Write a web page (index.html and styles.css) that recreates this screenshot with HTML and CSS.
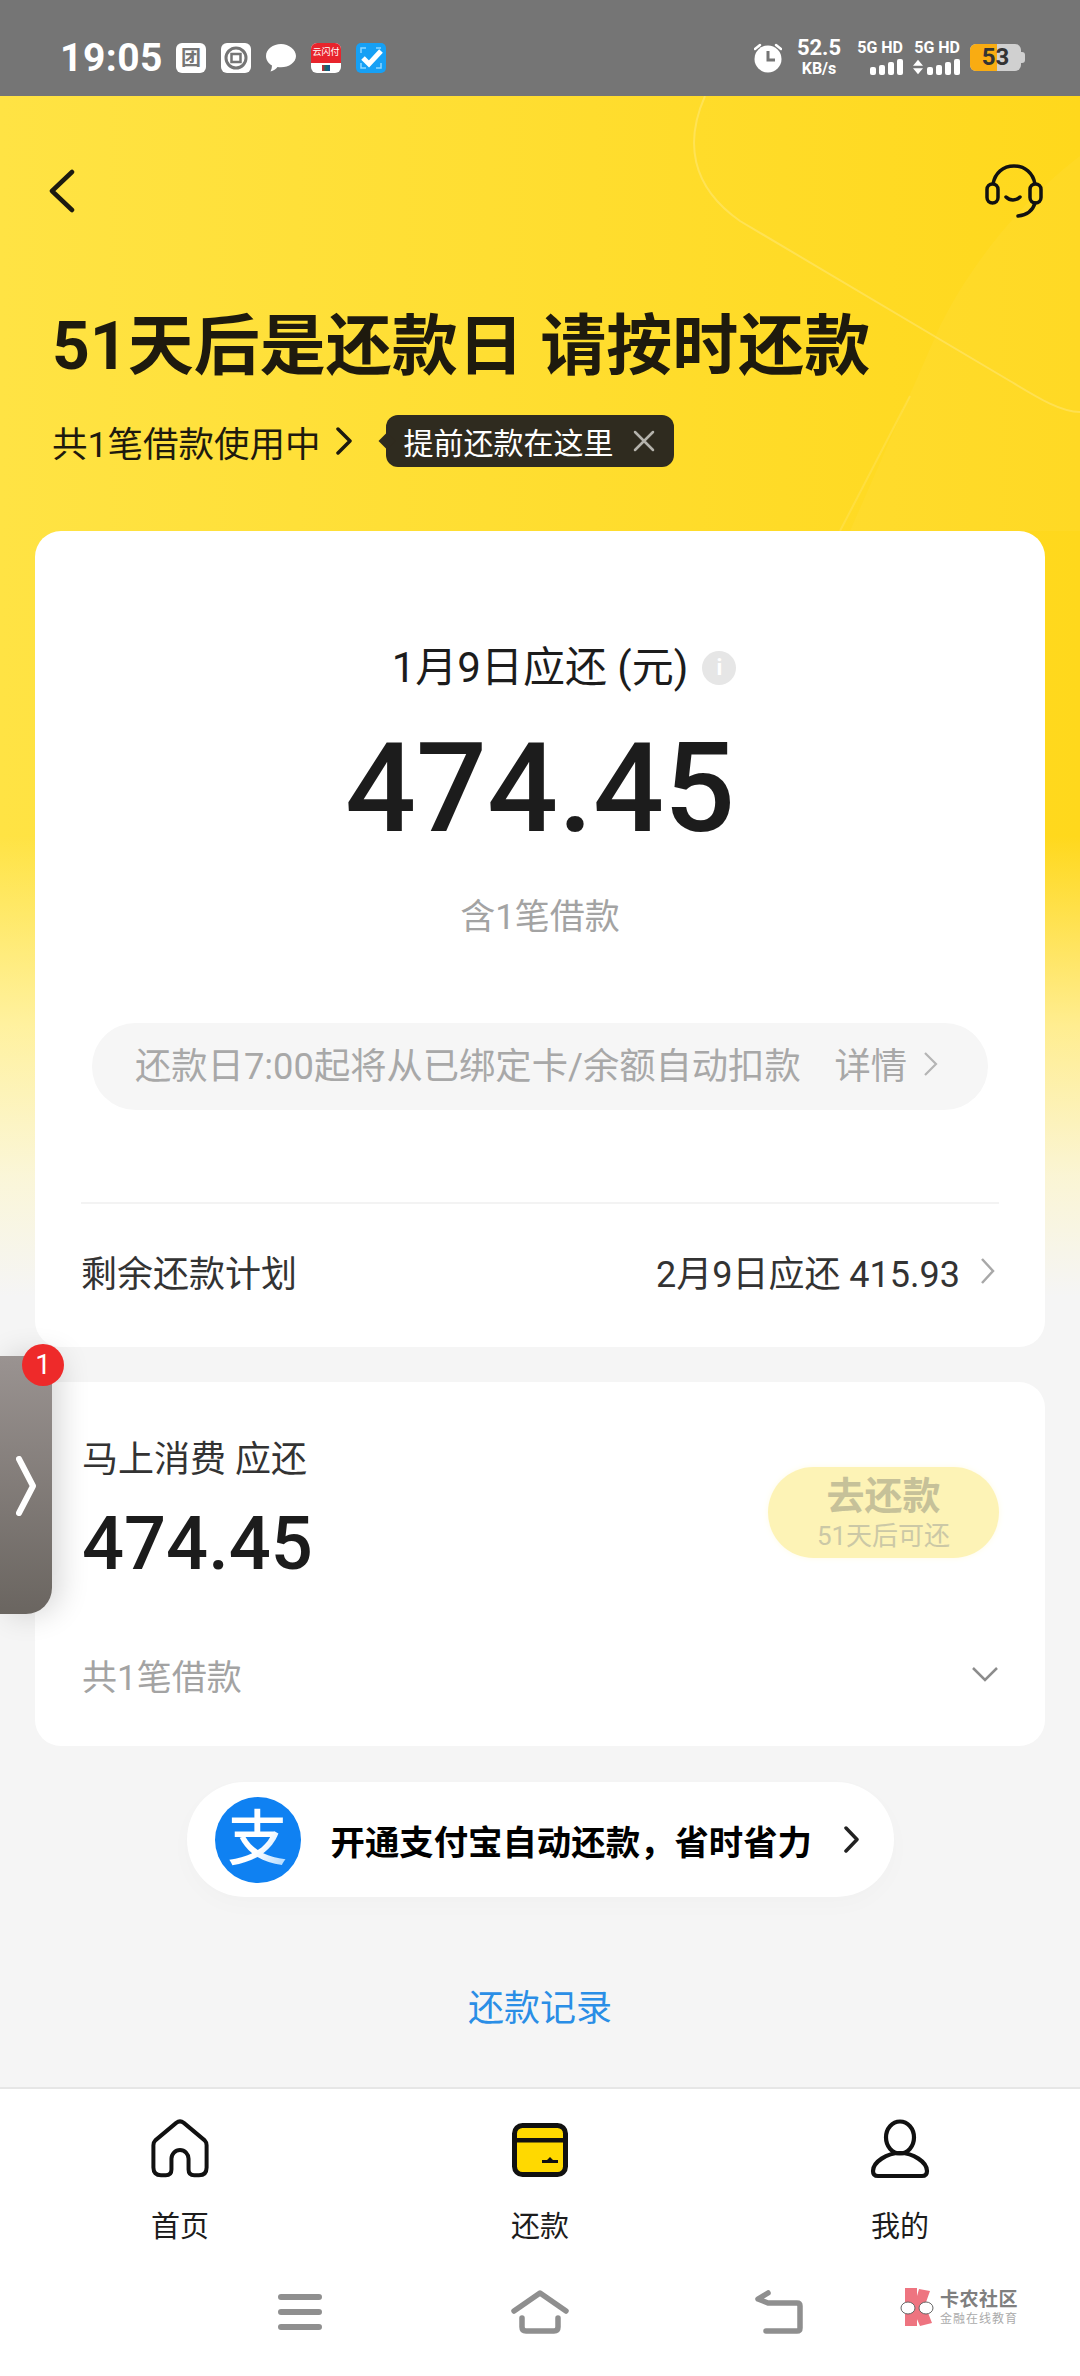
FILE: index.html
```html
<!DOCTYPE html>
<html lang="zh-CN">
<head>
  <meta charset="UTF-8">
  <title>还款</title>
  <link rel="stylesheet" href="styles.css">
</head>
<body>

  <div class="statusbar">
    <div class="status-left">
      <span class="time">19:05</span>
      <span class="app-icon app-tuan">团</span>
      <svg class="app-icon" viewBox="0 0 30 30">
        <rect width="30" height="30" rx="6" fill="#fff"/>
        <circle cx="15" cy="15" r="10" fill="none" stroke="#757575" stroke-width="3"/>
        <rect x="10.5" y="11" width="9" height="8" fill="none" stroke="#757575" stroke-width="2.5"/>
      </svg>
      <svg class="app-icon" viewBox="0 0 30 30">
        <path d="M15 1C7 1 0 6 0 13c0 4 2.500 7.500 6 9.500 0 2-.5 4-1.500 6 3-.7 5.500-2.500 7-4.500 1 .2 2.300.3 3.500.3 8 0 15-5 15-11.300S23 1 15 1z" fill="#fff"/>
      </svg>
      <span class="app-icon app-union"><span class="union-top">云闪付</span><i class="union-flag"></i></span>
      <svg class="app-icon" viewBox="0 0 30 30">
        <rect width="30" height="30" rx="5" fill="#16a0f5"/>
        <path d="M5 10V5h5M20 5h5M25 20v5h-5M10 25H5v-5" fill="none" stroke="#8fd6ff" stroke-width="1.500"/>
        <path d="M7 15l6 6L25 8" fill="none" stroke="#fff" stroke-width="5"/>
      </svg>
    </div>
    <div class="status-right">
      <svg class="alarm" viewBox="0 0 28 30">
        <circle cx="14" cy="16" r="13.500" fill="#fff"/>
        <path d="M1 6l5-4M27 6l-5-4" stroke="#fff" stroke-width="2.500" stroke-linecap="round"/>
        <path d="M14 8v9h7" fill="none" stroke="#757575" stroke-width="3"/>
      </svg>
      <div class="speed"><b>52.5</b><span>KB/s</span></div>
      <div class="sim">
        <span class="sim-label">5G HD</span>
        <div class="bars"><i class="b1"></i><i class="b2"></i><i class="b3"></i><i class="b4"></i></div>
      </div>
      <div class="sim">
        <span class="sim-label">5G HD</span>
        <div class="bars">
          <svg class="updown" viewBox="0 0 11 16"><path d="M5.500 0L11 6.500H0zM5.500 16L0 9.500h11z" fill="#fff"/></svg>
          <i class="b1"></i><i class="b2"></i><i class="b3"></i><i class="b4"></i>
        </div>
      </div>
      <div class="battery"><div class="battery-fill"></div><span>53</span></div>
    </div>
  </div>

  <div class="main">
    <svg class="deco" viewBox="0 0 440 460">
      <path d="M440 60C400 90 340 150 300 230L210 435H440z" fill="#fff" opacity="0.04"/>
      <path d="M65 0C45 45 50 90 100 125L370 285C395 300 420 316 440 316" fill="none" stroke="#fff" stroke-width="2" opacity="0.2"/>
      <path d="M200 435L270 300" fill="none" stroke="#fff" stroke-width="2" opacity="0.12"/>
    </svg>

    <div class="topbar">
      <svg class="back" viewBox="0 0 26 44"><path d="M23 3L3 22l20 19" fill="none" stroke="#1c1a10" stroke-width="4.500" stroke-linecap="round" stroke-linejoin="round"/></svg>
      <svg class="service" viewBox="0 0 58 54">
        <path d="M8 20C10 9 18 2 29 2s19 7 21 18" fill="none" stroke="#111" stroke-width="3.500"/>
        <rect x="2" y="20" width="11" height="19" rx="5.500" fill="none" stroke="#111" stroke-width="3.500"/>
        <rect x="45" y="20" width="11" height="19" rx="5.500" fill="none" stroke="#111" stroke-width="3.500"/>
        <path d="M21 33c4 4 10 4 14 0" fill="none" stroke="#111" stroke-width="3.500" stroke-linecap="round"/>
        <path d="M50 39c-2 7-8 12-17 13" fill="none" stroke="#111" stroke-width="3.500" stroke-linecap="round"/>
      </svg>
    </div>

    <h1 class="title">51天后是还款日 请按时还款</h1>
    <div class="subtitle">
      <span>共1笔借款使用中</span>
      <svg class="sub-arrow" viewBox="0 0 18 28"><path d="M3 2l12 12L3 26" fill="none" stroke="#1c1a10" stroke-width="3.500" stroke-linecap="round" stroke-linejoin="round"/></svg>
      <div class="tip">
        <span>提前还款在这里</span>
        <svg class="tip-close" viewBox="0 0 22 22"><path d="M2 2l18 18M20 2L2 20" stroke="#b5b3ac" stroke-width="2.500" stroke-linecap="round"/></svg>
      </div>
    </div>

    <div class="card card-due">
      <div class="due-label">1月9日应还 (元)<span class="info">i</span></div>
      <div class="due-amount">474.45</div>
      <div class="due-sub">含1笔借款</div>
      <div class="notice">
        <span class="notice-text">还款日7:00起将从已绑定卡/余额自动扣款</span>
        <span class="notice-more">详情</span>
        <svg class="notice-arrow" viewBox="0 0 15 26"><path d="M2 2l11 11L2 24" fill="none" stroke="#b5b5b5" stroke-width="2.200"/></svg>
      </div>
      <div class="plan-row">
        <span>剩余还款计划</span>
        <div class="plan-right">
          <span>2月9日应还 415.93</span>
          <svg class="plan-arrow" viewBox="0 0 15 28"><path d="M2 2l11 12L2 26" fill="none" stroke="#a8a8a8" stroke-width="2.500"/></svg>
        </div>
      </div>
    </div>

    <div class="card card-loan">
      <div class="loan-top">
        <div>
          <div class="loan-label">马上消费 应还</div>
          <div class="loan-amount">474.45</div>
        </div>
        <div class="pay-btn">
          <b>去还款</b>
          <span>51天后可还</span>
        </div>
      </div>
      <div class="loan-foot">
        <span>共1笔借款</span>
        <svg class="down-arrow" viewBox="0 0 28 16"><path d="M2 2l12 12L26 2" fill="none" stroke="#8c8c8c" stroke-width="2.500"/></svg>
      </div>
    </div>

    <div class="alipay">
      <span class="alipay-logo"><span>支</span></span>
      <span class="alipay-text">开通支付宝自动还款，省时省力</span>
      <svg class="alipay-arrow" viewBox="0 0 17 27"><path d="M3 2l11 11.500L3 25" fill="none" stroke="#222" stroke-width="3.500" stroke-linecap="round" stroke-linejoin="round"/></svg>
    </div>

    <div class="records">还款记录</div>
  </div>

  <div class="side-tab">
    <span class="side-badge">1</span>
    <svg class="side-arrow" viewBox="0 0 20 60"><path d="M3 3l14 27L3 57" fill="none" stroke="#fff" stroke-width="6" stroke-linecap="round" stroke-linejoin="round"/></svg>
  </div>

  <div class="tabbar">
    <div class="tab">
      <svg class="tab-icon" viewBox="0 0 60 60">
        <path d="M4 22L26 4q4-3 8 0l22 18q2 2 2 5v23q0 8-8 8h-5q-6 0-6-6V41a9 9 0 0 0-18 0v11q0 6-6 6h-5q-8 0-8-8V27q0-3 2-5z" transform="translate(1.500 0) scale(0.95 0.97)" fill="none" stroke="#111" stroke-width="4.200" stroke-linejoin="round"/>
      </svg>
      <span>首页</span>
    </div>
    <div class="tab">
      <svg class="tab-icon" viewBox="0 0 60 60">
        <rect x="4.500" y="6.500" width="51" height="49" rx="8" fill="#ffd900" stroke="#111" stroke-width="5"/>
        <rect x="5" y="19" width="50" height="4.500" fill="#111"/>
        <path d="M32 44h16v-3h-5l-3-3-3 3h-5z" fill="#111"/>
      </svg>
      <span>还款</span>
    </div>
    <div class="tab">
      <svg class="tab-icon" viewBox="0 0 60 60">
        <ellipse cx="30" cy="18.500" rx="14" ry="16" fill="none" stroke="#111" stroke-width="4.200"/>
        <path d="M30 34C17 34 3 43 3 52q0 5 5 5h44q5 0 5-5c0-9-14-18-27-18z" fill="none" stroke="#111" stroke-width="4.200"/>
      </svg>
      <span>我的</span>
    </div>
  </div>

  <div class="navbar">
    <svg class="nav-icon" viewBox="0 0 60 44"><path d="M11 7h38M11 22h38M11 37h38" stroke="#8f8f8f" stroke-width="6" stroke-linecap="round"/></svg>
    <svg class="nav-icon" viewBox="0 0 60 44"><path d="M4 21L30 3l26 18" fill="none" stroke="#8f8f8f" stroke-width="5.500" stroke-linecap="round" stroke-linejoin="round"/><path d="M12 28v9q0 4 4 4h28q4 0 4-4v-9" fill="none" stroke="#8f8f8f" stroke-width="5.500" stroke-linecap="round"/></svg>
    <svg class="nav-icon" viewBox="0 0 60 44"><path d="M18 3L8 9l10 4h29q3 0 3 3v22q0 3-3 3H16" fill="none" stroke="#8f8f8f" stroke-width="5.500" stroke-linecap="round" stroke-linejoin="round"/></svg>
  </div>

  <div class="watermark">
    <svg class="wm-logo" viewBox="0 0 36 38">
      <path d="M5 0h12v38H5zM19 1l11 2-5 14 7 18-12 3-7-16z" fill="#ee7480"/>
      <ellipse cx="8" cy="20" rx="7" ry="6" fill="#fff" stroke="#666" stroke-width="1"/>
      <ellipse cx="26" cy="20" rx="7" ry="6" fill="#fff" stroke="#666" stroke-width="1"/>
    </svg>
    <div class="wm-text"><b>卡农社区</b><span>金融在线教育</span></div>
  </div>

</body>
</html>
```

FILE: styles.css
```css
* {
  box-sizing: border-box;
}

body {
  margin: 0;
  width: 1080px;
  height: 2376px;
  display: flex;
  flex-direction: column;
  position: relative;
  overflow: hidden;
  font-family: Roboto, "Noto Sans CJK SC", sans-serif;
  background: #fff;
  color: #1c1c1c;
}

/* status bar */
.statusbar {
  height: 96px;
  flex: none;
  background: #757575;
  color: #fff;
  display: flex;
  justify-content: space-between;
  align-items: center;
  padding: 19px 59px 0 60px;
}

.status-left {
  display: flex;
  align-items: center;
  gap: 15px;
}

.time {
  font-size: 39px;
  font-weight: 700;
  width: 101px;
  letter-spacing: 0.5px;
}

.app-icon {
  display: block;
  width: 30px;
  height: 30px;
  flex: none;
}

.app-tuan {
  background: #fff;
  border-radius: 6px;
  color: #757575;
  font-size: 20px;
  font-weight: 700;
  line-height: 30px;
  text-align: center;
}

.app-union {
  background: #fff;
  border-radius: 6px;
  overflow: hidden;
  display: flex;
  flex-direction: column;
  align-items: center;
}

.union-top {
  width: 100%;
  height: 20px;
  background: #e8242c;
  color: #fff;
  font-size: 9px;
  line-height: 18px;
  text-align: center;
}

.union-flag {
  width: 8px;
  height: 6px;
  margin-top: 2px;
  background: linear-gradient(90deg, #d8232a, #0d6b6b 50%, #1a4f94);
}

.status-right {
  display: flex;
  align-items: center;
}

.alarm {
  width: 28px;
  height: 30px;
  margin-right: 13px;
}

.speed {
  width: 48px;
  text-align: center;
  margin-right: 12px;
  display: flex;
  flex-direction: column;
  align-items: center;
  white-space: nowrap;
}

.speed b {
  font-size: 22px;
  line-height: 23px;
  font-weight: 700;
}

.speed span {
  font-size: 16px;
  line-height: 20px;
  font-weight: 700;
}

.sim {
  width: 48px;
  margin-right: 9px;
  display: flex;
  flex-direction: column;
  align-items: flex-end;
  white-space: nowrap;
}

.sim-label {
  font-size: 16px;
  line-height: 16px;
  font-weight: 700;
}

.bars {
  display: flex;
  align-items: flex-end;
  gap: 3px;
  height: 17px;
  margin-top: 2px;
}

.bars i {
  width: 6px;
  background: #fff;
  border-radius: 2px;
}

.bars .b1 { height: 8px; }
.bars .b2 { height: 10px; }
.bars .b3 { height: 13px; }
.bars .b4 { height: 16px; }

.updown {
  width: 10px;
  height: 16px;
  margin-right: 1px;
}

.battery {
  width: 51px;
  height: 27px;
  margin-left: 1px;
  background: #d0d0d0;
  border-radius: 6px;
  position: relative;
  overflow: visible;
  color: #333;
  font-size: 24px;
  font-weight: 700;
  line-height: 27px;
  text-align: center;
}

.battery::after {
  content: "";
  position: absolute;
  right: -4px;
  top: 8px;
  width: 4px;
  height: 11px;
  border-radius: 0 3px 3px 0;
  background: #d0d0d0;
}

.battery-fill {
  position: absolute;
  left: 0;
  top: 0;
  bottom: 0;
  width: 27px;
  background: #f9ac12;
  border-radius: 6px 0 0 6px;
}

.battery span {
  position: relative;
}

/* main area */
.main {
  flex: 1;
  position: relative;
  overflow: hidden;
  background:
    linear-gradient(180deg, rgba(255, 250, 225, 0) 740px, rgba(255, 250, 215, 0.62) 930px, rgba(250, 248, 232, 0.9) 1080px, #f5f5f5 1200px),
    linear-gradient(90deg, #ffe344, #ffd81c);
}

.deco {
  position: absolute;
  right: 0;
  top: 0;
  width: 440px;
  height: 460px;
}

.topbar,
.title,
.subtitle,
.card,
.alipay,
.records {
  position: relative;
}

.topbar {
  height: 190px;
  display: flex;
  justify-content: space-between;
  align-items: center;
  padding: 0 37px 0 49px;
}

.back {
  width: 26px;
  height: 44px;
}

.service {
  width: 58px;
  height: 54px;
}

.title {
  margin: 26px 0 0 52px;
  font-size: 66px;
  line-height: 70px;
  font-weight: 700;
  color: #1e1a0e;
  white-space: nowrap;
}

.subtitle {
  margin: 33px 0 0 52px;
  height: 52px;
  display: flex;
  align-items: center;
  font-size: 35.500px;
  color: #1e1a0e;
}

.sub-arrow {
  width: 18px;
  height: 28px;
  margin-left: 15px;
}

.tip {
  width: 288px;
  height: 52px;
  margin-left: 33px;
  padding: 0 19px 0 17px;
  position: relative;
  display: flex;
  justify-content: space-between;
  align-items: center;
  background: #2f2b1f;
  border-radius: 12px;
  color: #fff;
  font-size: 30px;
}

.tip::before {
  content: "";
  position: absolute;
  left: -5px;
  top: 20px;
  width: 12px;
  height: 12px;
  background: #2f2b1f;
  transform: rotate(45deg);
}

.tip-close {
  width: 22px;
  height: 22px;
}

.card {
  margin: 0 35px;
  background: #fff;
  border-radius: 26px;
}

/* due card */
.card-due {
  margin-top: 64px;
  padding: 112px 46px 4px;
  text-align: center;
}

.due-label {
  font-size: 42px;
  line-height: 50px;
  color: #1c1c1c;
  display: flex;
  justify-content: center;
  align-items: center;
  padding-left: 48px;
}

.info {
  width: 34px;
  height: 34px;
  margin-left: 14px;
  border-radius: 50%;
  background: #e6e6e6;
  color: #fff;
  font-size: 22px;
  line-height: 34px;
  font-weight: 700;
}

.due-amount {
  margin-top: 26px;
  font-size: 125px;
  line-height: 140px;
  font-weight: 500;
  color: #1c1c1c;
}

.due-sub {
  margin-top: 34px;
  font-size: 35px;
  line-height: 50px;
  color: #a3a3a3;
}

.notice {
  margin: 80px 11px 0;
  height: 87px;
  padding: 0 50px 0 43px;
  display: flex;
  align-items: center;
  background: #f6f6f6;
  border-radius: 44px;
  color: #a8a8a8;
  font-size: 36.300px;
  line-height: 87px;
  white-space: nowrap;
}

.notice-more {
  margin-left: auto;
}

.notice-arrow {
  width: 15px;
  height: 26px;
  margin-left: 16px;
  margin-top: -6px;
}

.plan-row {
  margin-top: 92px;
  height: 141px;
  padding-bottom: 6px;
  border-top: 2px solid #f3f3f3;
  display: flex;
  justify-content: space-between;
  align-items: center;
  font-size: 36px;
  color: #333;
}

.plan-right {
  display: flex;
  align-items: center;
  padding-right: 4px;
}

.plan-arrow {
  width: 15px;
  height: 28px;
  margin-left: 20px;
}

/* loan card */
.card-loan {
  margin-top: 35px;
  padding: 53px 46px 47px 47px;
}

.loan-top {
  display: flex;
  justify-content: space-between;
  align-items: center;
}

.loan-label {
  font-size: 36px;
  line-height: 50px;
  color: #333;
}

.loan-amount {
  margin-top: 14px;
  font-size: 74px;
  line-height: 90px;
  font-weight: 500;
  color: #1c1c1c;
}

.pay-btn {
  width: 231px;
  height: 91px;
  background: #fdf3b6;
  border-radius: 46px;
  box-shadow: 0 0 6px #fffbe6;
  display: flex;
  flex-direction: column;
  align-items: center;
  color: #cbc8a6;
  font-size: 26px;
  line-height: 32px;
}

.pay-btn b {
  font-size: 38px;
  line-height: 50px;
  margin-top: 4px;
  color: #c6c199;
}

.pay-btn span {
  margin-top: -1px;
}

.loan-foot {
  margin-top: 60px;
  height: 50px;
  display: flex;
  justify-content: space-between;
  align-items: center;
  font-size: 35px;
  color: #a3a3a3;
}

.down-arrow {
  width: 28px;
  height: 16px;
}

/* alipay banner */
.alipay {
  width: 707px;
  height: 115px;
  margin: 36px auto 0;
  padding: 0 34px 0 28px;
  background: #fff;
  border-radius: 58px;
  box-shadow: 0 8px 24px rgba(0, 0, 0, 0.02);
  display: flex;
  align-items: center;
}

.alipay-logo {
  width: 86px;
  height: 86px;
  flex: none;
  border-radius: 50%;
  background: #0f81f2;
  display: flex;
  justify-content: center;
  align-items: center;
  font-size: 60px;
  font-weight: 500;
  line-height: 86px;
}

.alipay-logo span {
  background: linear-gradient(125deg, #fff 55%, #b5dcff 85%);
  -webkit-background-clip: text;
  background-clip: text;
  color: transparent;
}

.alipay-text {
  margin-left: 30px;
  font-size: 34.400px;
  font-weight: 700;
  color: #000;
  white-space: nowrap;
}

.alipay-arrow {
  width: 17px;
  height: 27px;
  margin-left: auto;
}

.records {
  margin-top: 87px;
  font-size: 36px;
  line-height: 50px;
  text-align: center;
  color: #2a8ee6;
}

/* floating side tab */
.side-tab {
  position: absolute;
  left: 0;
  top: 1356px;
  width: 52px;
  height: 258px;
  background: linear-gradient(180deg, #9a9391, #6a6560);
  border-radius: 0 0 26px 0;
  box-shadow: 8px 0 30px rgba(0, 0, 0, 0.16);
}

.side-badge {
  position: absolute;
  left: 22px;
  top: -12px;
  width: 42px;
  height: 42px;
  border-radius: 50%;
  background: #ee2a2a;
  color: #fff;
  font-size: 28px;
  line-height: 42px;
  text-align: center;
}

.side-arrow {
  position: absolute;
  left: 16px;
  top: 100px;
  width: 20px;
  height: 60px;
}

/* bottom tabs */
.tabbar {
  flex: none;
  display: grid;
  grid-template-columns: repeat(3, 1fr);
  border-top: 2px solid #e6e6e6;
  padding-top: 30px;
  background: #fff;
}

.tab {
  display: flex;
  flex-direction: column;
  align-items: center;
  gap: 28px;
  font-size: 29px;
  line-height: 40px;
  color: #1c1c1c;
}

.tab-icon {
  display: block;
  width: 60px;
  height: 60px;
}

.navbar {
  flex: none;
  height: 129px;
  padding: 0 180px;
  display: grid;
  grid-template-columns: repeat(3, 1fr);
  justify-items: center;
  align-items: center;
  background: #fff;
}

.nav-icon {
  display: block;
  width: 60px;
  height: 44px;
}

/* watermark sits over the nav bar */
.watermark {
  position: absolute;
  left: 900px;
  top: 2288px;
  display: flex;
  align-items: flex-start;
  gap: 4px;
}

.wm-logo {
  width: 36px;
  height: 38px;
}

.wm-text {
  display: flex;
  flex-direction: column;
  color: #7f7f7f;
  white-space: nowrap;
}

.wm-text b {
  font-size: 19px;
  line-height: 24px;
  letter-spacing: 0.5px;
}

.wm-text span {
  font-size: 12px;
  line-height: 15px;
  letter-spacing: 1px;
  color: #ababab;
}
```
